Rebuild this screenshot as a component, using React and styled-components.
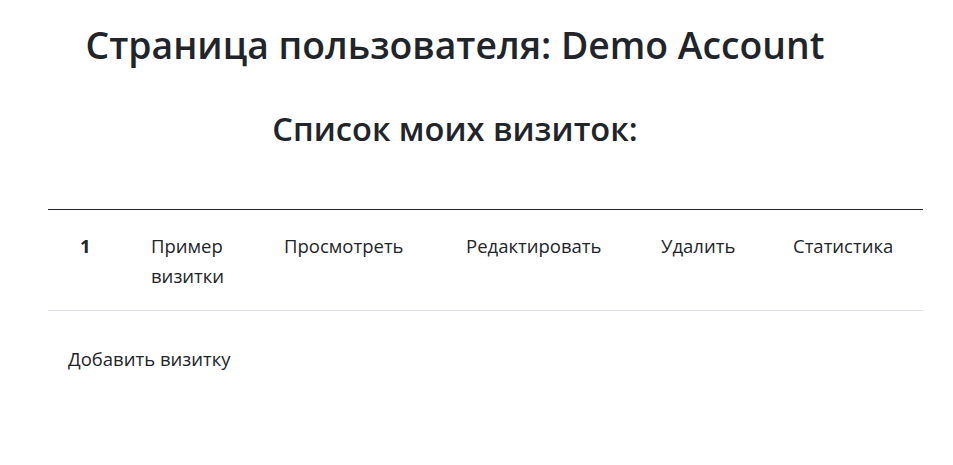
import React from 'react';
import styled, { createGlobalStyle } from 'styled-components';

const GlobalStyle = createGlobalStyle`
  body {
    margin: 0;
    background: #fff;
    color: #212529;
    font-family: "Open Sans", "Noto Sans", sans-serif;
  }
`;

const cards = [
  { id: 1, name: 'Пример визитки' },
];

const columns = [87, 133, 182, 195, 132, 146];

const App = () => (
  <Page>
    <GlobalStyle />
    <Header>
      <Title>Страница пользователя: Demo Account</Title>
      <Subtitle>Список моих визиток:</Subtitle>
    </Header>

    <Table>
      <colgroup>
        {columns.map((w, i) => <col key={i} style={{ width: w }} />)}
      </colgroup>
      <tbody>
        {cards.map(card => (
          <Row key={card.id}>
            <Cell first>{card.id}</Cell>
            <Cell>{card.name}</Cell>
            <Cell><Link>Просмотреть</Link></Cell>
            <Cell><Link>Редактировать</Link></Cell>
            <Cell><Link>Удалить</Link></Cell>
            <Cell><Link>Статистика</Link></Cell>
          </Row>
        ))}
      </tbody>
    </Table>

    <AddLink>Добавить визитку</AddLink>
  </Page>
);

export default App;

const Page = styled.div`
  padding: 0 30px 0 48px;
  font-size: 18.5px;
  line-height: 30px;
`;

const Header = styled.div`
  width: 814px;
  text-align: center;
`;

const Title = styled.h1`
  margin: 0;
  padding-top: 21px;
  font-size: 37.3px;
  font-weight: 600;
  line-height: 48px;
`;

const Subtitle = styled.h3`
  margin: 0;
  padding-top: 40px;
  font-size: 32.6px;
  font-weight: 600;
  line-height: 40px;
`;

const Table = styled.table`
  margin-top: 60px;
  width: 875px;
  border-collapse: collapse;
  table-layout: fixed;
  border-top: 1px solid #212529;
`;

const Row = styled.tr`
  border-bottom: 1px solid #dee2e6;
`;

const Cell = styled.td`
  padding: 21px 16px 19px;
  padding-left: ${p => (p.first ? '32px' : '16px')};
  vertical-align: top;
  font-weight: ${p => (p.first ? 700 : 400)};
`;

const Link = styled.span`
  color: #212529;
  cursor: pointer;
`;

const AddLink = styled.div`
  margin-top: 33px;
  padding-left: 20px;
  cursor: pointer;
`;
